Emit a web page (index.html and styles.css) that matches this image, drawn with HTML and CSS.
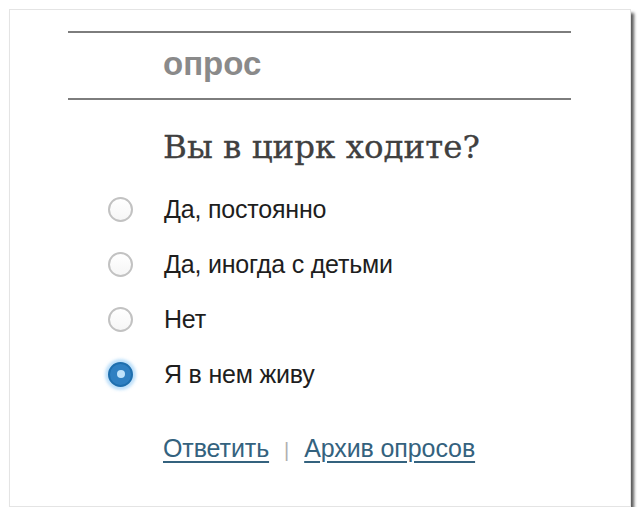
FILE: index.html
```html
<!DOCTYPE html>
<html lang="ru">
<head>
<meta charset="utf-8">
<link rel="stylesheet" href="styles.css">
</head>
<body>
<div class="card">
  <div class="rule"></div>
  <div class="title">опрос</div>
  <div class="rule"></div>
  <h2 class="question">Вы в цирк ходите?</h2>
  <ul class="options">
    <li class="option"><span class="radio"></span><span class="label">Да, постоянно</span></li>
    <li class="option"><span class="radio"></span><span class="label">Да, иногда с детьми</span></li>
    <li class="option"><span class="radio"></span><span class="label">Нет</span></li>
    <li class="option"><span class="radio checked"></span><span class="label">Я в нем живу</span></li>
  </ul>
  <div class="links">
    <a class="link" href="#">Ответить</a>
    <span class="sep">|</span>
    <a class="link" href="#">Архив опросов</a>
  </div>
</div>
</body>
</html>
```

FILE: styles.css
```css
html, body {
  margin: 0;
  padding: 0;
  background: #fff;
}
.card {
  box-sizing: border-box;
  margin: 9px 0 0 9px;
  width: 622px;
  height: 498px;
  background: #fff;
  border: 1px solid #e4e4e4;
  box-shadow: 3px 4px 3px rgba(0, 0, 0, 0.65);
  padding: 21px 0 0 58px;
  display: flex;
  flex-direction: column;
  align-items: flex-start;
}
.rule {
  width: 503px;
  height: 2px;
  background: #7d7d7d;
}
.title {
  height: 65px;
  box-sizing: border-box;
  padding: 16px 0 0 95px;
  font-family: "Liberation Sans", Arial, sans-serif;
  font-weight: bold;
  font-size: 33px;
  color: #8a8a8a;
  line-height: 30px;
}
.question {
  margin: 27px 0 0 95px;
  font-family: "DejaVu Serif", Georgia, serif;
  font-weight: normal;
  font-size: 32.5px;
  line-height: 40px;
  color: #404040;
  -webkit-text-stroke: 0.3px #404040;
}
.options {
  list-style: none;
  margin: 29px 0 0 40px;
  padding: 0;
  display: flex;
  flex-direction: column;
  gap: 29px;
}
.option {
  display: flex;
  align-items: center;
  gap: 31px;
  height: 26px;
}
.radio {
  box-sizing: border-box;
  width: 25px;
  height: 25px;
  border-radius: 50%;
  border: 2px solid #c2c2c2;
  background: linear-gradient(#fff, #f6f6f6);
  position: relative;
  flex: none;
}
.radio.checked {
  border: 2px solid #1f6fae;
  background: #2f80c2;
  box-shadow: 0 0 3px 3px rgba(140, 200, 245, 0.55);
}
.radio.checked::after {
  content: "";
  position: absolute;
  left: 6.5px;
  top: 6.5px;
  width: 8px;
  height: 8px;
  border-radius: 50%;
  background: #bfe3fb;
}
.label {
  font-family: "Liberation Sans", Arial, sans-serif;
  font-size: 25px;
  color: #1e1e1e;
  line-height: 26px;
  letter-spacing: -0.2px;
}
.links {
  margin: 47px 0 0 95px;
  display: flex;
  align-items: baseline;
  gap: 15px;
  font-family: "Liberation Sans", Arial, sans-serif;
  font-size: 25px;
  line-height: 28px;
  letter-spacing: -0.1px;
}
.link {
  color: #34627e;
  text-decoration: underline;
  text-underline-offset: 4px;
}
.sep {
  color: #b0b0b0;
  font-size: 20px;
}
```
